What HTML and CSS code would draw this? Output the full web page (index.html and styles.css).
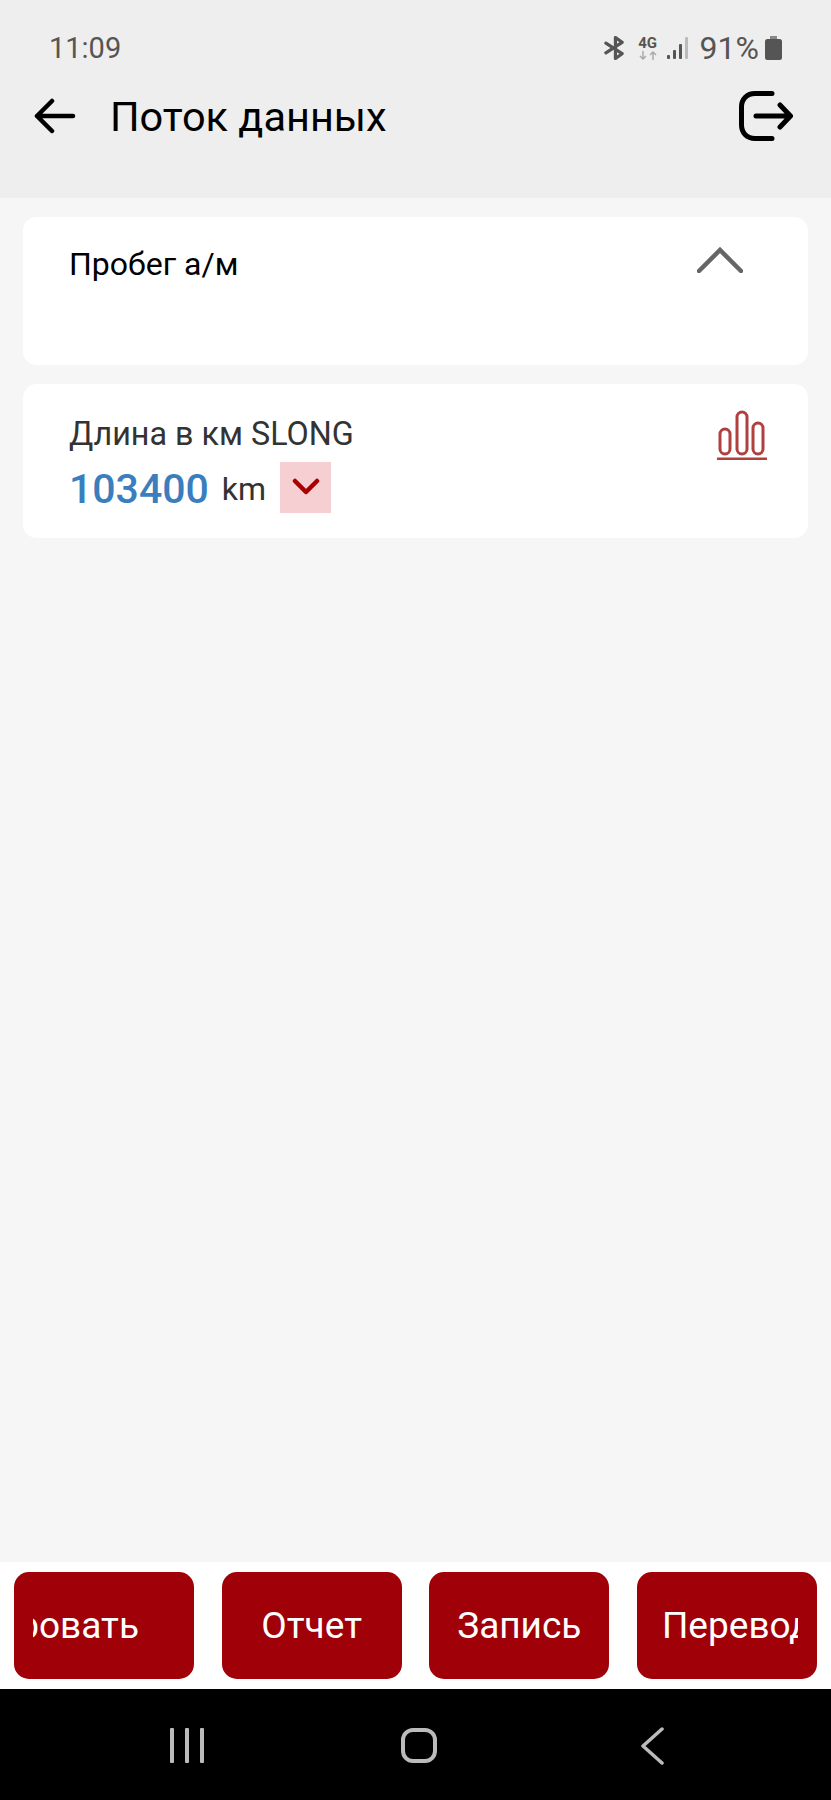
FILE: index.html
```html
<!DOCTYPE html>
<html lang="ru">
<head>
    <meta charset="UTF-8">
    <meta name="viewport" content="width=device-width, initial-scale=1.0">
    <title>Поток данных</title>
    <link rel="stylesheet" href="styles.css">
</head>
<body>
    <header class="top">
        <div class="status">
            <span class="time">11:09</span>
            <div class="status-right">
                <svg class="ic-bt" viewBox="0 0 22 24"><path d="M2 7l17 11-7 5V1l7 5L2 17" fill="none" stroke="#555" stroke-width="3.4" stroke-linejoin="round" stroke-linecap="round"/></svg>
                <div class="net">
                    <span class="net-label">4G</span>
                    <svg class="ic-arrows" viewBox="0 0 20 9"><path d="M5 0v8M2 5l3 3 3-3" fill="none" stroke="#aaa" stroke-width="1.5"/><path d="M15 9V1M12 4l3-3 3 3" fill="none" stroke="#aaa" stroke-width="1.5"/></svg>
                </div>
                <svg class="ic-signal" viewBox="0 0 22 24"><rect x="0" y="19" width="3" height="4" rx="1" fill="#555"/><rect x="6" y="14" width="3" height="9" rx="1" fill="#555"/><rect x="12" y="8" width="3" height="15" rx="1" fill="#555"/><rect x="18" y="1" width="3" height="22" rx="1" fill="#bbb"/></svg>
                <span class="batt-text">91%</span>
                <svg class="ic-batt" viewBox="0 0 17 24"><rect x="5" y="0" width="7" height="3" fill="#888"/><rect x="0" y="3" width="17" height="21" rx="2.5" fill="#555"/></svg>
            </div>
        </div>
        <div class="bar">
            <svg class="ic-back" viewBox="0 0 42 36"><path d="M39 18H3M18 3L3 18l15 15" fill="none" stroke="#000" stroke-width="4.5" stroke-linecap="round" stroke-linejoin="round"/></svg>
            <h1 class="title">Поток данных</h1>
            <svg class="ic-exit" viewBox="0 0 54 50"><path d="M33 2.500H16C8 2.500 2.500 8 2.500 16v18c0 8 5.500 13.500 13.500 13.500h17" fill="none" stroke="#000" stroke-width="5" stroke-linecap="round"/><path d="M17 25h34M41 14l10.500 11L41 36" fill="none" stroke="#000" stroke-width="5" stroke-linecap="round" stroke-linejoin="round"/></svg>
        </div>
    </header>

    <main class="content">
        <section class="card card-group">
            <span class="group-name">Пробег а/м</span>
            <svg class="ic-up" viewBox="0 0 46 26"><path d="M2 24L23 3l21 21" fill="none" stroke="#666" stroke-width="4.5" stroke-linecap="round"/></svg>
        </section>
        <section class="card card-item">
            <div class="item-text">
                <div class="item-name">Длина в км SLONG</div>
                <div class="item-value">
                    <span class="value">103400</span>
                    <span class="unit">km</span>
                    <span class="trend">
                        <svg viewBox="0 0 28 18"><path d="M3 3l11 11L25 3" fill="none" stroke="#a80000" stroke-width="4.5" stroke-linecap="round" stroke-linejoin="round"/></svg>
                    </span>
                </div>
            </div>
            <svg class="ic-chart" viewBox="0 0 50 50"><g fill="none" stroke="#b04040" stroke-width="3"><rect x="3" y="19" width="10" height="25" rx="5"/><rect x="20" y="2" width="10" height="42" rx="5"/><rect x="36" y="13" width="10" height="31" rx="5"/></g><path d="M0 49h50" stroke="#b04040" stroke-width="3"/></svg>
        </section>
    </main>

    <div class="actions">
        <button class="btn"><span class="btn-label btn-label-end">Копировать</span></button>
        <button class="btn"><span class="btn-label">Отчет</span></button>
        <button class="btn"><span class="btn-label">Запись</span></button>
        <button class="btn"><span class="btn-label btn-label-start">Перевод данных</span></button>
    </div>

    <nav class="navbar">
        <div class="nav-recent"><i></i><i></i><i></i></div>
        <div class="nav-home"></div>
        <svg class="ic-navback" viewBox="0 0 24 38"><path d="M22 2L3 19l19 17" fill="none" stroke="#bbb" stroke-width="3.500" stroke-linecap="round" stroke-linejoin="round"/></svg>
    </nav>
</body>
</html>
```

FILE: styles.css
```css
* {
    box-sizing: border-box;
    margin: 0;
    padding: 0;
}
body {
    font-family: Roboto, "Liberation Sans", sans-serif;
    background: #f6f6f6;
    width: 831px;
    height: 1800px;
    display: flex;
    flex-direction: column;
    overflow: hidden;
}
svg {
    display: block;
    flex: none;
}

/* header */
.top {
    background: #eeeeee;
    height: 198px;
    flex: none;
}
.status {
    display: flex;
    justify-content: space-between;
    align-items: center;
    height: 36px;
    margin-top: 30px;
    padding: 0 49px 0 49px;
    color: #555;
}
.time {
    font-size: 29px;
}
.status-right {
    display: flex;
    align-items: center;
}
.ic-bt {
    width: 21px;
    height: 24px;
}
.net {
    width: 22px;
    margin-left: 12px;
    display: flex;
    flex-direction: column;
    align-items: center;
}
.net-label {
    font-size: 15px;
    font-weight: 700;
    line-height: 13px;
}
.ic-arrows {
    width: 20px;
    height: 9px;
    margin-top: 1px;
}
.ic-signal {
    width: 22px;
    height: 24px;
    margin-left: 8px;
}
.batt-text {
    font-size: 32px;
    margin-left: 11px;
}
.ic-batt {
    width: 17px;
    height: 24px;
    margin-left: 6px;
}
.bar {
    display: flex;
    align-items: center;
    height: 56px;
    margin-top: 22px;
    padding: 0 38px 0 34px;
}
.ic-back {
    width: 42px;
    height: 36px;
}
.title {
    font-size: 41.500px;
    font-weight: 400;
    color: #000;
    margin-left: 34px;
    flex: 1;
}
.ic-exit {
    width: 54px;
    height: 50px;
}

/* cards */
.content {
    flex: 1;
    padding: 19px 23px 0;
    display: flex;
    flex-direction: column;
    gap: 19px;
}
.card {
    background: #fff;
    border-radius: 14px;
    display: flex;
    justify-content: space-between;
    align-items: flex-start;
}
.card-group {
    height: 148px;
    padding: 28px 65px 0 46px;
}
.group-name {
    font-size: 32px;
    color: #000;
}
.ic-up {
    width: 46px;
    height: 26px;
    margin-top: 2px;
}
.card-item {
    height: 154px;
    padding: 32px 41px 0 46px;
}
.item-name {
    font-size: 32.300px;
    line-height: 37px;
    color: #333;
}
.item-value {
    display: flex;
    align-items: center;
    margin-top: 8px;
}
.value {
    font-size: 41px;
    font-weight: 500;
    color: #3a7ebd;
    padding-top: 4px;
}
.unit {
    font-size: 32px;
    color: #333;
    margin-left: 13px;
    padding-top: 4px;
}
.trend {
    width: 51px;
    height: 51px;
    background: #f6cfd2;
    margin-left: 14px;
    display: flex;
    align-items: center;
    justify-content: center;
}
.trend svg {
    width: 28px;
    height: 18px;
}
.ic-chart {
    width: 50px;
    height: 50px;
    margin-top: -6px;
}

/* bottom buttons */
.actions {
    flex: none;
    background: #fff;
    height: 127px;
    padding: 10px 14px;
    display: flex;
    justify-content: space-between;
}
.btn {
    width: 180px;
    height: 107px;
    background: #a00008;
    border: none;
    border-radius: 15px;
    color: #fff;
    font-family: inherit;
    font-size: 37px;
    padding: 0 19px;
    display: flex;
    align-items: center;
    justify-content: center;
}
.btn-label {
    display: flex;
    justify-content: center;
    white-space: nowrap;
    overflow: hidden;
    width: 100%;
}
.btn-label-end {
    justify-content: flex-end;
    padding-right: 36px;
}
.btn-label-start {
    justify-content: flex-start;
    padding-left: 6px;
}

/* android nav */
.navbar {
    flex: none;
    height: 111px;
    background: #000;
    padding: 2px 0 0 170px;
    display: flex;
    align-items: center;
}
.nav-recent {
    width: 34px;
    height: 35px;
    display: flex;
    justify-content: space-between;
}
.nav-recent i {
    width: 4px;
    background: #bbb;
    border-radius: 1px;
}
.nav-home {
    width: 36px;
    height: 35px;
    border: 4px solid #bbb;
    border-radius: 12px;
    margin-left: 197px;
}
.ic-navback {
    width: 24px;
    height: 38px;
    margin-left: 203px;
}
```
